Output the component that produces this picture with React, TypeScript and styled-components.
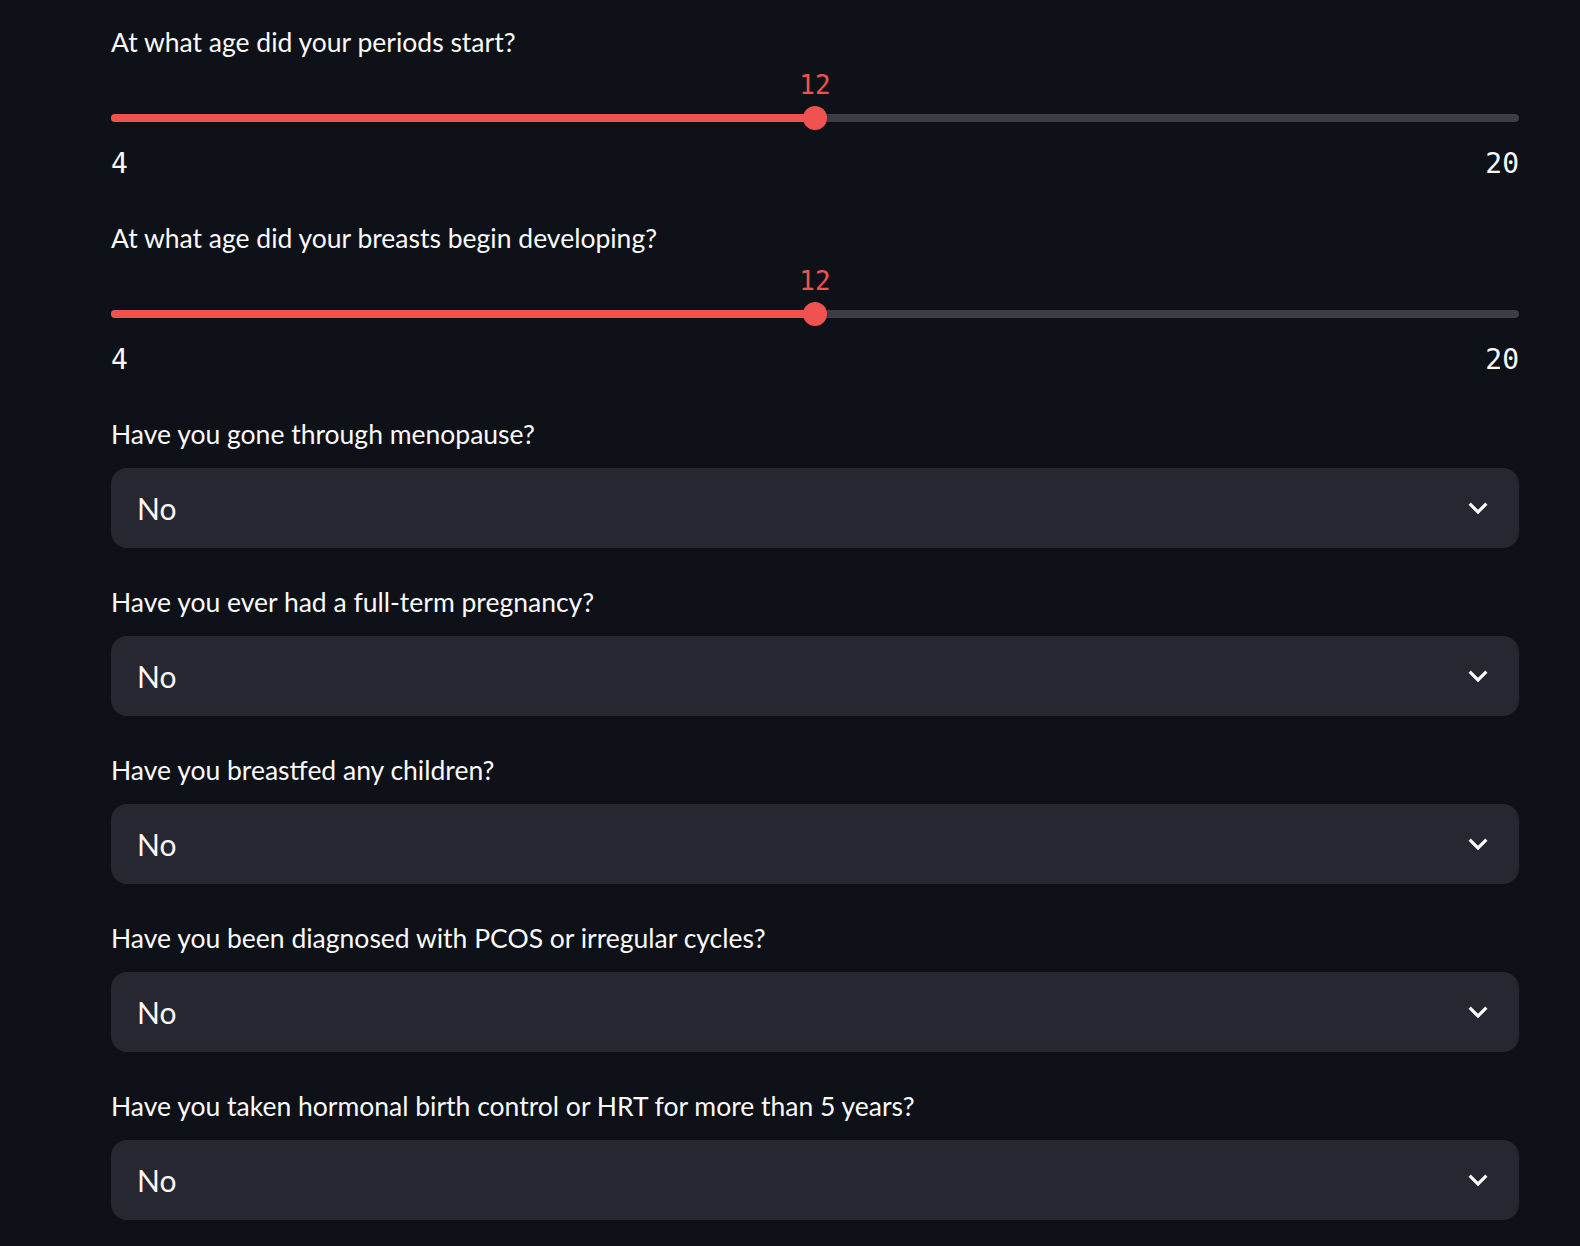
import React from "react";
import styled, { createGlobalStyle } from "styled-components";

const GlobalStyle = createGlobalStyle`
  html, body { margin: 0; padding: 0; background: #0e1117; }
  body { font-family: Lato, "Noto Sans", sans-serif; color: #fafafa; }
`;

const Page = styled.main`
  min-height: 1246px;
  padding: 22px 0 0 111px;
  box-sizing: border-box;
  display: flex;
  flex-direction: column;
`;

const Column = styled.div`
  width: 1408px;
  display: flex;
  flex-direction: column;
`;

const SliderBlock = styled.section`
  display: flex;
  flex-direction: column;
  margin-bottom: 38px;
`;

const SelectGroup = styled.div`
  display: flex;
  flex-direction: column;
`;

const SelectBlock = styled.section`
  display: flex;
  flex-direction: column;
  margin-bottom: 34px;
`;

const Label = styled.label`
  display: block;
  font-family: Lato, "Noto Sans", sans-serif;
  font-size: 26.5px;
  line-height: 40px;
  height: 40px;
  color: #fafafa;
  white-space: nowrap;
`;

const Rail = styled.div`
  position: relative;
  height: 24px;
  margin-top: 44px;
  display: flex;
  align-items: center;
`;

const Track = styled.div`
  position: relative;
  width: 100%;
  height: 8px;
  border-radius: 4px;
  background: #3b3d47;
`;

const Fill = styled.div`
  height: 100%;
  border-radius: 4px 0 0 4px;
  background: #f0524f;
`;

const Thumb = styled.div`
  position: absolute;
  top: 0;
  width: 24px;
  height: 24px;
  margin-left: -12px;
  border-radius: 50%;
  background: #f0524f;
`;

const ThumbValue = styled.div`
  position: absolute;
  top: -34px;
  transform: translateX(-50%);
  font-family: "DejaVu Sans Mono", "Liberation Mono", monospace;
  font-size: 26px;
  line-height: 26px;
  color: #f0524f;
  white-space: nowrap;
`;

const Ticks = styled.div`
  display: flex;
  justify-content: space-between;
  margin-top: 18px;
  font-family: "DejaVu Sans Mono", "Liberation Mono", monospace;
  font-size: 28px;
  line-height: 32px;
  height: 32px;
  color: #fafafa;
`;

const SelectBox = styled.div`
  margin-top: 14px;
  height: 80px;
  box-sizing: border-box;
  border-radius: 16px;
  background: #262730;
  display: flex;
  align-items: center;
  justify-content: space-between;
  padding: 0 22px 0 26px;
  font-family: Lato, "Noto Sans", sans-serif;
  font-size: 30px;
  color: #fafafa;
`;

const Chevron = styled.svg`
  width: 38px;
  height: 38px;
  fill: #fafafa;
  flex: none;
`;

type SliderProps = { label: string; min: number; max: number; value: number };

function Slider({ label, min, max, value }: SliderProps) {
  const pct = ((value - min) / (max - min)) * 100;
  return (
    <SliderBlock>
      <Label>{label}</Label>
      <Rail>
        <Track>
          <Fill style={{ width: `${pct}%` }} />
        </Track>
        <Thumb style={{ left: `${pct}%` }} />
        <ThumbValue style={{ left: `${pct}%` }}>{value}</ThumbValue>
      </Rail>
      <Ticks>
        <span>{min}</span>
        <span>{max}</span>
      </Ticks>
    </SliderBlock>
  );
}

function Select({ label, value }: { label: string; value: string }) {
  return (
    <SelectBlock>
      <Label>{label}</Label>
      <SelectBox>
        <span>{value}</span>
        <Chevron viewBox="0 0 24 24">
          <path d="M16.59 8.59L12 13.17 7.41 8.59 6 10l6 6 6-6z" />
        </Chevron>
      </SelectBox>
    </SelectBlock>
  );
}

const selects = [
  "Have you gone through menopause?",
  "Have you ever had a full-term pregnancy?",
  "Have you breastfed any children?",
  "Have you been diagnosed with PCOS or irregular cycles?",
  "Have you taken hormonal birth control or HRT for more than 5 years?",
];

export default function App() {
  return (
    <>
      <GlobalStyle />
      <Page>
        <Column>
          <Slider label="At what age did your periods start?" min={4} max={20} value={12} />
          <Slider label="At what age did your breasts begin developing?" min={4} max={20} value={12} />
          <SelectGroup>
            {selects.map((q) => (
              <Select key={q} label={q} value="No" />
            ))}
          </SelectGroup>
        </Column>
      </Page>
    </>
  );
}
